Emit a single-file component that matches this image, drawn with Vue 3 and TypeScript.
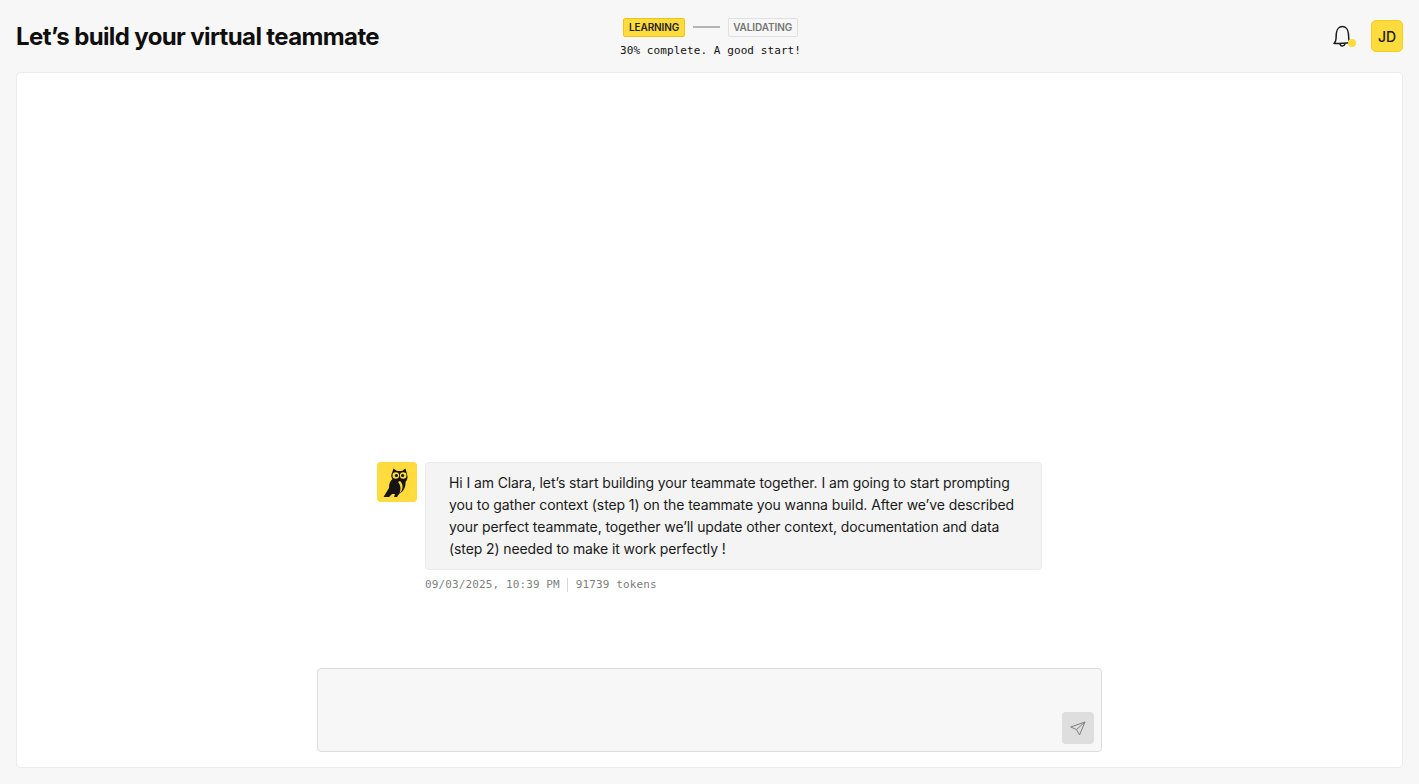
<script setup lang="ts">
const message =
  "Hi I am Clara, let’s start building your teammate together. I am going to start prompting you to gather context (step 1) on the teammate you wanna build. After we’ve described your perfect teammate, together we’ll update other context, documentation and data (step 2) needed to make it work perfectly !";
</script>

<template>
  <div class="page">
    <header class="header">
      <h1 class="title">Let’s build your virtual teammate</h1>
      <div class="progress">
        <div class="steps">
          <span class="step active">LEARNING</span>
          <span class="line"></span>
          <span class="step">VALIDATING</span>
        </div>
        <div class="status">30% complete. A good start!</div>
      </div>
      <div class="actions">
        <div class="bell">
          <svg width="22" height="24" viewBox="0 0 22 24" fill="none" stroke="#1c1c1c" stroke-width="1.5" stroke-linecap="round" stroke-linejoin="round">
            <path d="M2 19.5c1.2-1.300 1.900-2.400 2-4.500l.3-5.500C4.600 5.300 7.200 2.600 10.400 2.600s5.700 2.700 6 6.900l.4 5.500c.1 1.600.6 2.800 1.200 3.500-5 .9-11 1-16 1z" />
            <path d="M8 20.200c.3 1.200 1.200 1.800 2.400 1.800s2.200-.6 2.500-1.900" />
          </svg>
          <span class="dot"></span>
        </div>
        <div class="avatar">JD</div>
      </div>
    </header>

    <main class="card">
      <div class="message">
        <div class="owl">
          <svg width="40" height="40" viewBox="0 0 40 40" fill="#141414">
            <path d="M16.500 6.500 20 9h5l3.500-2.500L30 12c1 3 .5 6-1.500 8 .5 5-2.500 10-6.500 12l-2 3h-3l1-3h-3l-3 3H6.500L12 26c0-4 1-7 3.500-9-1.500-2-1.500-4-.5-6z" />
            <circle cx="18.800" cy="13.500" r="3.300" fill="#ffdb3d" />
            <circle cx="26.200" cy="13.500" r="3.300" fill="#ffdb3d" />
            <circle cx="19.400" cy="13.500" r="1.600" />
            <circle cx="25.600" cy="13.500" r="1.600" />
            <path d="M23 19c3.500 3 3.500 8.500-.5 12.500 1.500-4 1.500-8-1.500-11.500z" fill="#ffdb3d" />
          </svg>
        </div>
        <div class="content">
          <div class="bubble">{{ message }}</div>
          <div class="meta">
            <span>09/03/2025, 10:39 PM</span>
            <span class="sep"></span>
            <span>91739 tokens</span>
          </div>
        </div>
      </div>

      <div class="composer">
        <button class="send" type="button" aria-label="Send">
          <svg width="16" height="16" viewBox="0 0 16 16" fill="none" stroke="#808080" stroke-width="1" stroke-linejoin="round">
            <path d="M15 2 .7 7l5.800 2.500L9.500 15z" />
            <path d="M6.500 9.500 15 2" />
          </svg>
        </button>
      </div>
    </main>
  </div>
</template>

<style>
html,
body {
  margin: 0;
  background: #f7f7f7;
}
</style>

<style scoped>
.page {
  box-sizing: border-box;
  height: 784px;
  padding: 0 16px 16px;
  display: flex;
  flex-direction: column;
  background: #f7f7f7;
  font-family: Inter, "Liberation Sans", sans-serif;
  color: #0f0f0f;
  overflow: hidden;
}
.header {
  height: 72px;
  flex-shrink: 0;
  display: grid;
  grid-template-columns: 1fr auto 1fr;
  align-items: center;
}
.title {
  margin: 2px 0 0;
  font-size: 24px;
  font-weight: 700;
  letter-spacing: -0.62px;
  line-height: 32px;
}
.progress {
  display: flex;
  flex-direction: column;
  align-items: center;
  gap: 6px;
  margin-top: 4px;
  padding-left: 2px;
}
.steps {
  display: flex;
  align-items: center;
  gap: 8px;
}
.step {
  box-sizing: border-box;
  height: 19px;
  padding: 0 4.5px;
  display: flex;
  align-items: center;
  border: 1px solid #e0e0e0;
  border-radius: 2px;
  font-size: 10px;
  font-weight: 600;
  letter-spacing: -0.1px;
  color: #757575;
}
.step.active {
  background: #ffdb3d;
  border-color: #f2c40f;
  color: #222;
}
.line {
  width: 27px;
  height: 2px;
  background: #b5b5b5;
}
.status {
  font-family: "DejaVu Sans Mono", "Liberation Mono", monospace;
  font-size: 11px;
  line-height: 16px;
  letter-spacing: 0.08px;
  color: #111;
}
.actions {
  justify-self: end;
  display: flex;
  align-items: center;
  gap: 15px;
}
.bell {
  position: relative;
  width: 24px;
  height: 24px;
  display: flex;
}
.dot {
  position: absolute;
  right: 0;
  bottom: 1px;
  width: 8px;
  height: 8px;
  border-radius: 50%;
  background: #ffdb3d;
}
.avatar {
  box-sizing: border-box;
  width: 32px;
  height: 32px;
  display: flex;
  align-items: center;
  justify-content: center;
  background: #ffdb3d;
  border: 1px solid #f5cc20;
  border-radius: 5px;
  font-size: 14px;
  font-weight: 500;
  color: #1a1a1a;
}
.card {
  flex: 1;
  box-sizing: border-box;
  background: #fff;
  border: 1px solid #ebebeb;
  border-radius: 5px;
  padding: 0 0 15px;
  display: flex;
  flex-direction: column;
  justify-content: flex-end;
  align-items: center;
}
.message {
  width: 665px;
  display: flex;
  gap: 8px;
  margin-bottom: 75px;
}
.owl {
  width: 40px;
  height: 40px;
  flex-shrink: 0;
  display: flex;
  background: #ffdb3d;
  border-radius: 4px;
}
.content {
  flex: 1;
}
.bubble {
  box-sizing: border-box;
  background: #f4f4f4;
  border: 1px solid #ebebeb;
  border-radius: 4px;
  padding: 9px 23px;
  font-size: 14px;
  line-height: 22px;
  letter-spacing: -0.1px;
  color: #1a1a1a;
}
.meta {
  margin-top: 7px;
  display: flex;
  align-items: center;
  gap: 7px;
  font-family: "DejaVu Sans Mono", "Liberation Mono", monospace;
  font-size: 11px;
  line-height: 16px;
  letter-spacing: 0.12px;
  color: #808080;
}
.sep {
  width: 1px;
  height: 14px;
  margin-right: 1px;
  background: #d8d8d8;
}
.composer {
  box-sizing: border-box;
  width: 785px;
  height: 84px;
  background: #f7f7f7;
  border: 1px solid #dcdcdc;
  border-radius: 4px;
  padding: 0 7px 7px 0;
  display: flex;
  align-items: flex-end;
  justify-content: flex-end;
}
.send {
  width: 32px;
  height: 32px;
  padding: 0;
  display: flex;
  align-items: center;
  justify-content: center;
  background: #dedede;
  border: none;
  border-radius: 4px;
}
</style>
